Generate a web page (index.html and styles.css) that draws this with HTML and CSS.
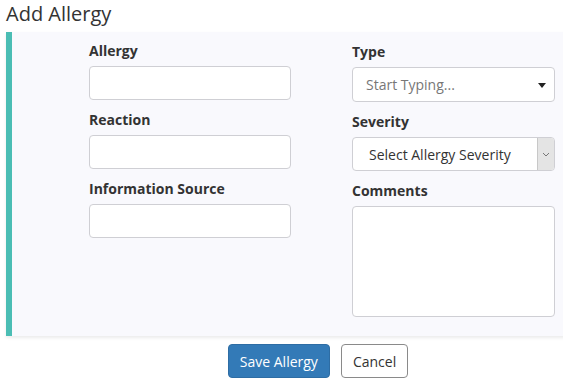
FILE: index.html
```html
<!DOCTYPE html>
<html lang="en">
<head>
  <meta charset="UTF-8">
  <title>Add Allergy</title>
  <link rel="stylesheet" href="styles.css">
</head>
<body>
  <div class="page">
    <h2 class="title">Add Allergy</h2>

    <!-- Form Panel -->
    <div class="panel">
      <div class="col">
        <label class="field-label">Allergy</label>
        <input class="field" type="text">
        <label class="field-label">Reaction</label>
        <input class="field" type="text">
        <label class="field-label">Information Source</label>
        <input class="field" type="text">
      </div>

      <div class="col col-right">
        <label class="field-label">Type</label>
        <div class="field combo">
          <span class="placeholder">Start Typing...</span>
          <span class="caret"></span>
        </div>
        <label class="field-label">Severity</label>
        <div class="field select">
          <span class="select-text">Select Allergy Severity</span>
          <span class="select-btn">
            <svg width="8" height="5" viewBox="0 0 8 5"><path d="M1 1l3 3 3-3" fill="none" stroke="#777" stroke-width="1"/></svg>
          </span>
        </div>
        <label class="field-label">Comments</label>
        <textarea class="field comments"></textarea>
      </div>
    </div>

    <!-- Actions -->
    <div class="actions">
      <button class="btn btn-primary">Save Allergy</button>
      <button class="btn btn-default">Cancel</button>
    </div>
  </div>
</body>
</html>
```

FILE: styles.css
```css
/* General Reset */
* {
  margin: 0;
  padding: 0;
  box-sizing: border-box;
  font-family: 'Open Sans', sans-serif;
}

html, body {
  overflow: hidden;
}

body {
  background: #fff;
  color: #333;
}

.page {
  width: 630px;
  padding-left: 6px;
}

.title {
  font-size: 20px;
  font-weight: 400;
  line-height: 28px;
  height: 32px;
  color: #333;
}

/* Panel */
.panel {
  display: flex;
  gap: 61px;
  background: #f9f9fd;
  border-left: 6px solid #4bbdb4;
  padding: 9px 0 19px 77px;
  box-shadow: 0 2px 3px rgba(0, 0, 0, 0.08);
}

.col {
  display: flex;
  flex-direction: column;
  width: 202px;
}

.col-right {
  width: 203px;
  padding-top: 1px;
}

.field-label {
  font-size: 14px;
  font-weight: 700;
  line-height: 20px;
  margin-bottom: 5px;
  color: #333;
}

.field {
  display: block;
  height: 34px;
  background: #fff;
  border: 1px solid #cfcfd4;
  border-radius: 4px;
  margin-bottom: 10px;
  font-size: 14px;
}

.col-right .combo {
  height: 35px;
}

/* Type combo */
.combo {
  display: flex;
  align-items: center;
  justify-content: space-between;
  padding: 0 8px 0 13px;
}

.placeholder {
  color: #777;
}

.caret {
  width: 0;
  height: 0;
  border-left: 4px solid transparent;
  border-right: 4px solid transparent;
  border-top: 5px solid #222;
  margin-top: 2px;
}

/* Severity select */
.select {
  display: flex;
  align-items: stretch;
  overflow: hidden;
}

.select-text {
  flex: 1;
  display: flex;
  align-items: center;
  padding-left: 16px;
  color: #333;
}

.select-btn {
  width: 17px;
  background: #e4e4e4;
  border-left: 1px solid #c8c8c8;
  display: flex;
  align-items: center;
  justify-content: center;
}

.col-right .comments {
  height: 111px;
  margin-bottom: 0;
  resize: none;
}

/* Buttons */
.actions {
  display: flex;
  justify-content: center;
  gap: 11px;
  margin-top: 8px;
}

.btn {
  height: 34px;
  padding: 0 11px;
  font-size: 14px;
  border-radius: 4px;
  cursor: pointer;
}

.btn-primary {
  background: #337ab7;
  border: 1px solid #2e6da4;
  color: #fff;
}

.btn-default {
  background: #fff;
  border: 1px solid #8a8a8a;
  color: #333;
}
```
